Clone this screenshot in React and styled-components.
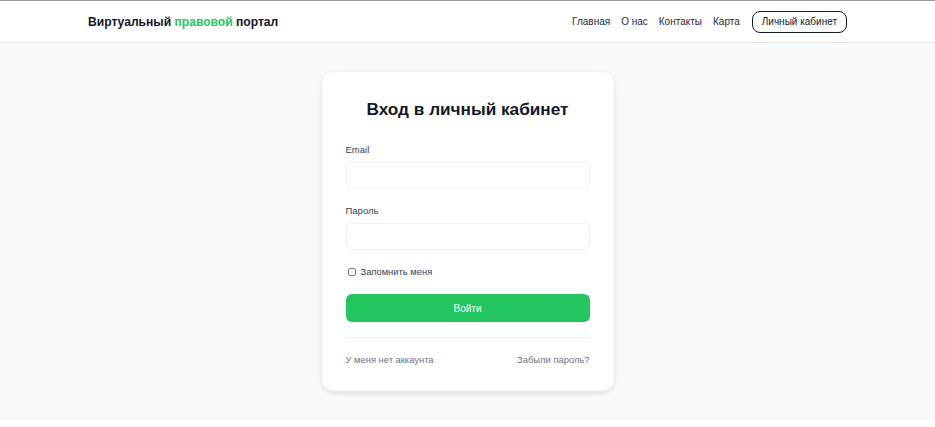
import React from 'react';
import styled, { createGlobalStyle } from 'styled-components';

const GlobalStyle = createGlobalStyle`
  html, body {
    margin: 0;
    padding: 0;
    background: #ffffff;
    font-family: "Liberation Sans", Arial, sans-serif;
    color: #111827;
  }
  * { box-sizing: border-box; }
`;

const Header = styled.header`
  background: #ffffff;
  border-top: 1px solid #9a9a9a;
  border-bottom: 1px solid #e5e7eb;
  box-shadow: 0 1px 3px rgba(0, 0, 0, 0.05);
  height: 43px;
`;

const HeaderInner = styled.div`
  width: 759px;
  margin: 0 auto;
  height: 100%;
  display: flex;
  align-items: center;
  justify-content: space-between;
`;

const Logo = styled.div`
  font-size: 12.1px;
  font-weight: 700;
  color: #111827;
`;

const Accent = styled.span`
  color: #22c55e;
`;

const Nav = styled.nav`
  display: flex;
  align-items: center;
  gap: 11px;
`;

const NavLink = styled.a`
  font-size: 10px;
  color: #1f2937;
  text-decoration: none;
`;

const CabinetButton = styled.a`
  font-size: 10px;
  line-height: 12px;
  color: #111827;
  text-decoration: none;
  border: 1.5px solid #111827;
  border-radius: 8px;
  padding: 4px 9px;
  margin-left: 1px;
`;

const Main = styled.main`
  background: #f8f9fb;
  padding: 29px 0 29px;
  display: flex;
  justify-content: center;
`;

const Card = styled.div`
  width: 292px;
  background: #ffffff;
  border-radius: 12px;
  box-shadow: 0 2px 6px rgba(0, 0, 0, 0.12);
  padding: 27px 24px 26px;
`;

const Title = styled.h1`
  margin: 0 0 25px;
  text-align: center;
  font-size: 17.2px;
  line-height: 20px;
  font-weight: 700;
  color: #111827;
`;

const Field = styled.div`
  display: flex;
  flex-direction: column;
  gap: 7px;
  margin-bottom: 16px;
`;

const Label = styled.label`
  font-size: 9.5px;
  line-height: 11px;
  color: #374151;
`;

const Input = styled.input`
  height: 27px;
  border: 1px solid #eef0f3;
  border-radius: 6px;
  background: #ffffff;
  outline: none;
`;

const CheckRow = styled.label`
  display: flex;
  align-items: center;
  gap: 5px;
  font-size: 9.4px;
  line-height: 11px;
  color: #374151;
  margin: 0 0 17px 2px;
`;

const Check = styled.input`
  width: 8px;
  height: 8px;
  margin: 0;
`;

const Submit = styled.button`
  display: block;
  width: 100%;
  height: 28px;
  background: #22c55e;
  color: #ffffff;
  border: none;
  border-radius: 6px;
  font-family: inherit;
  font-size: 10px;
`;

const Divider = styled.hr`
  border: none;
  border-top: 1px solid #eceef1;
  margin: 15px 0 16px;
`;

const Links = styled.div`
  display: flex;
  justify-content: space-between;
  line-height: 11px;
`;

const MutedLink = styled.a`
  font-size: 9.4px;
  color: #6b7280;
  text-decoration: none;
`;

export default function App() {
  return (
    <>
      <GlobalStyle />
      <Header>
        <HeaderInner>
          <Logo>
            Виртуальный <Accent>правовой</Accent> портал
          </Logo>
          <Nav>
            <NavLink href="#">Главная</NavLink>
            <NavLink href="#">О нас</NavLink>
            <NavLink href="#">Контакты</NavLink>
            <NavLink href="#">Карта</NavLink>
            <CabinetButton href="#">Личный кабинет</CabinetButton>
          </Nav>
        </HeaderInner>
      </Header>
      <Main>
        <Card>
          <Title>Вход в личный кабинет</Title>
          <Field>
            <Label>Email</Label>
            <Input type="email" />
          </Field>
          <Field>
            <Label>Пароль</Label>
            <Input type="password" />
          </Field>
          <CheckRow>
            <Check type="checkbox" />
            Запомнить меня
          </CheckRow>
          <Submit>Войти</Submit>
          <Divider />
          <Links>
            <MutedLink href="#">У меня нет аккаунта</MutedLink>
            <MutedLink href="#">Забыли пароль?</MutedLink>
          </Links>
        </Card>
      </Main>
    </>
  );
}
